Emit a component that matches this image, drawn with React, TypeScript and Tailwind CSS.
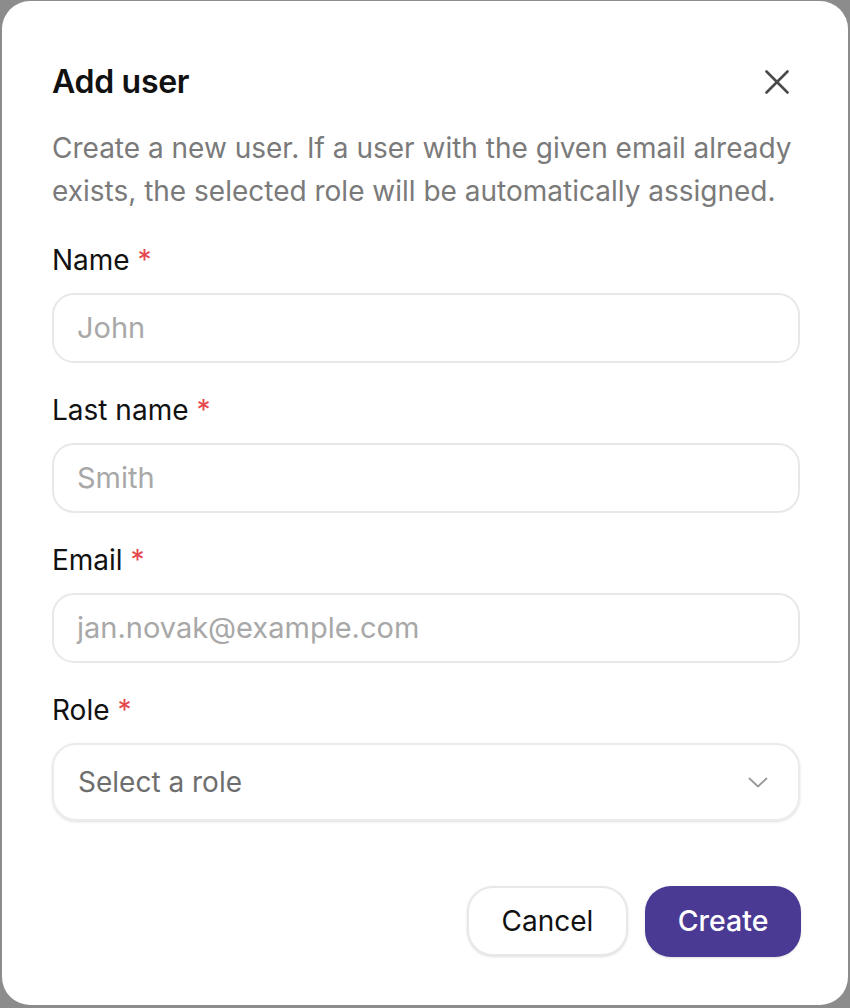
import React from "react";

const font = {fontFamily: 'Inter, "Noto Sans", sans-serif'};

const Field = ({label, placeholder}: {label: string; placeholder: string}) => (
    <div className="flex flex-col">
        <label className="text-[28px] leading-[36px] text-[#111]">
            {label} <span className="text-[#e5484d]">*</span>
        </label>
        <div className="mt-[15px] h-[70px] rounded-[22px] border-2 border-[#e8e8e8] flex items-center px-[23px]">
            <span className="text-[29px] text-[#a8a8a8]">{placeholder}</span>
        </div>
    </div>
);

export default function App() {
    return (
        <div className="w-[850px] h-[1008px] bg-[#8c8c8c] px-[2px] pt-[1px] pb-[3px]" style={font}>
            <div className="h-full bg-white rounded-[28px] pl-[50px] pr-[48px] pt-[59px] flex flex-col">
                <div className="flex items-center justify-between h-[44px]">
                    <h2 className="text-[32px] font-semibold text-[#111] tracking-[-0.3px]">Add user</h2>
                    <svg width="24" height="24" viewBox="0 0 24 24" className="mr-[11px]" fill="none"
                         stroke="#4a4a4a" strokeWidth="2.6" strokeLinecap="round">
                        <line x1="1.5" y1="1.5" x2="22.5" y2="22.5"/>
                        <line x1="22.5" y1="1.5" x2="1.5" y2="22.5"/>
                    </svg>
                </div>
                <p className="mt-[23px] text-[28px] leading-[43px] text-[#7a7a7a]">
                    Create a new user. If a user with the given email already exists, the selected role will be
                    automatically assigned.
                </p>
                <div className="mt-[29px] flex flex-col gap-[29px]">
                    <Field label="Name" placeholder="John"/>
                    <Field label="Last name" placeholder="Smith"/>
                    <Field label="Email" placeholder="jan.novak@example.com"/>
                    <div className="flex flex-col">
                        <label className="text-[28px] leading-[36px] text-[#111]">
                            Role <span className="text-[#e5484d]">*</span>
                        </label>
                        <div className="mt-[15px] h-[78px] rounded-[24px] border-2 border-[#ebebeb] shadow-sm flex items-center justify-between pl-[24px] pr-[30px]">
                            <span className="text-[28px] text-[#6e6e6e]">Select a role</span>
                            <svg width="20" height="11" viewBox="0 0 20 11" fill="none" stroke="#9a9a9a"
                                 strokeWidth="1.8" strokeLinecap="round" strokeLinejoin="round">
                                <polyline points="1.5,1.5 10,9.5 18.5,1.5"/>
                            </svg>
                        </div>
                    </div>
                </div>
                <div className="mt-[65px] flex justify-end gap-[17px] mr-[-1px]">
                    <button className="h-[70px] w-[161px] rounded-[26px] border-2 border-[#e8e8e8] bg-white text-[28px] text-[#111] shadow-sm">
                        Cancel
                    </button>
                    <button className="h-[71px] w-[156px] rounded-[26px] bg-[#4b3a94] text-[28.5px] font-medium text-white shadow-sm">
                        Create
                    </button>
                </div>
            </div>
        </div>
    );
}
